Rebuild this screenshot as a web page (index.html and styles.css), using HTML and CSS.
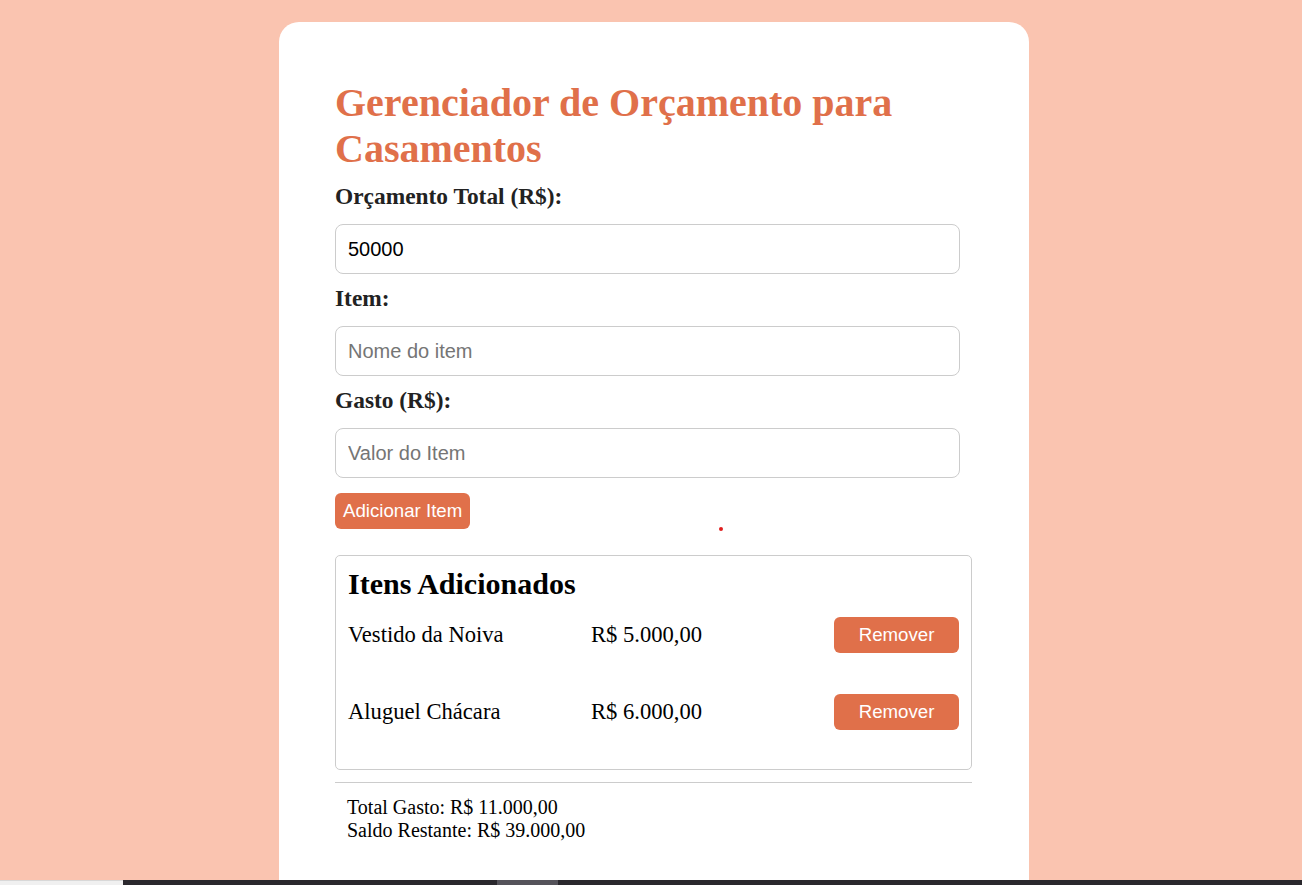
FILE: index.html
```html
<!DOCTYPE html>
<html lang="pt-BR">
<head>
<meta charset="utf-8">
<title>Gerenciador de Orçamento para Casamentos</title>
<link rel="stylesheet" href="styles.css">
</head>
<body>
<main class="card">
  <h1 class="title">Gerenciador de Orçamento para Casamentos</h1>
  <label class="label" for="budget">Orçamento Total (R$):</label>
  <input class="field" id="budget" type="text" value="50000">
  <label class="label" for="item">Item:</label>
  <input class="field" id="item" type="text" placeholder="Nome do item">
  <label class="label" for="cost">Gasto (R$):</label>
  <input class="field" id="cost" type="text" placeholder="Valor do Item">
  <div class="actions">
    <button class="btn btn-add" type="button">Adicionar Item</button>
    <span class="dot"></span>
  </div>
  <section class="items">
    <h2 class="items-title">Itens Adicionados</h2>
    <ul class="item-list">
      <li class="item-row">
        <span class="item-name">Vestido da Noiva</span>
        <span class="item-price">R$ 5.000,00</span>
        <button class="btn btn-remove" type="button">Remover</button>
      </li>
      <li class="item-row">
        <span class="item-name">Aluguel Chácara</span>
        <span class="item-price">R$ 6.000,00</span>
        <button class="btn btn-remove" type="button">Remover</button>
      </li>
    </ul>
  </section>
  <hr class="divider">
  <div class="totals">
    <div>Total Gasto: R$ 11.000,00</div>
    <div>Saldo Restante: R$ 39.000,00</div>
  </div>
</main>
<div class="taskbar">
  <div class="tb-start"></div>
  <div class="tb-gap"></div>
  <div class="tb-active"></div>
  <div class="tb-rest"></div>
</div>
</body>
</html>
```

FILE: styles.css
```css
html, body {
  margin: 0;
  padding: 0;
}
body {
  background: #fac4b0;
  font-family: "Liberation Serif", "Times New Roman", serif;
  color: #000;
  height: 885px;
  overflow: hidden;
  padding-left: 6px;
}
.card {
  box-sizing: border-box;
  width: 750px;
  margin: 22px auto 0;
  background: #fff;
  border-radius: 20px;
  padding: 58px 57px 60px 56px;
  min-height: 900px;
}
.title {
  margin: 0 0 12px;
  font-size: 40px;
  line-height: 46px;
  font-weight: bold;
  color: #e0704a;
}
.label {
  display: block;
  font-size: 23.4px;
  line-height: 25px;
  font-weight: bold;
  color: #222;
  margin-bottom: 15px;
}
.field {
  display: block;
  box-sizing: border-box;
  width: 625px;
  height: 50px;
  margin: 0 0 12px;
  padding: 0 12px;
  border: 1px solid #ccc;
  border-radius: 8px;
  font-family: "Liberation Sans", Arial, sans-serif;
  font-size: 20px;
  color: #000;
  background: #fff;
  outline: none;
}
.field::placeholder {
  color: #757575;
}
.actions {
  position: relative;
  margin-top: 15px;
  height: 36px;
}
.btn {
  background: #e0704a;
  color: #fff;
  border: none;
  border-radius: 6px;
  font-family: "Liberation Sans", Arial, sans-serif;
  font-size: 14pt;
  height: 36px;
  cursor: pointer;
  white-space: nowrap;
}
.btn-add {
  padding: 0 8px;
}
.dot {
  position: absolute;
  left: 384px;
  top: 34px;
  width: 4px;
  height: 4px;
  border-radius: 50%;
  background: #e01e1e;
}
.items {
  margin-top: 26px;
  border: 1px solid #ccc;
  border-radius: 5px;
  padding: 11px 12px 39px;
}
.items-title {
  margin: 0 0 16px;
  font-size: 30px;
  line-height: 34px;
  font-weight: bold;
}
.item-list {
  list-style: none;
  margin: 0;
  padding: 0;
  display: flex;
  flex-direction: column;
  gap: 41px;
}
.item-row {
  display: grid;
  grid-template-columns: 243px 1fr auto;
  align-items: center;
  height: 36px;
  font-size: 22.6px;
}
.btn-remove {
  width: 125px;
  padding: 0;
}
.divider {
  margin: 12px 0 0;
  border: none;
  border-top: 1px solid #ccc;
  height: 0;
}
.totals {
  padding: 13px 12px 0;
  font-size: 20px;
  line-height: 23px;
}
.taskbar {
  position: fixed;
  left: 0;
  right: 0;
  bottom: 0;
  height: 5px;
  display: flex;
}
.tb-start {
  width: 123px;
  background: #f0f0f0;
  border-top: 1px solid #d8d8d8;
  box-sizing: border-box;
}
.tb-gap {
  width: 374px;
  background: #2a282d;
}
.tb-active {
  width: 61px;
  background: #55535a;
}
.tb-rest {
  flex: 1;
  background: #2a282d;
}
```
